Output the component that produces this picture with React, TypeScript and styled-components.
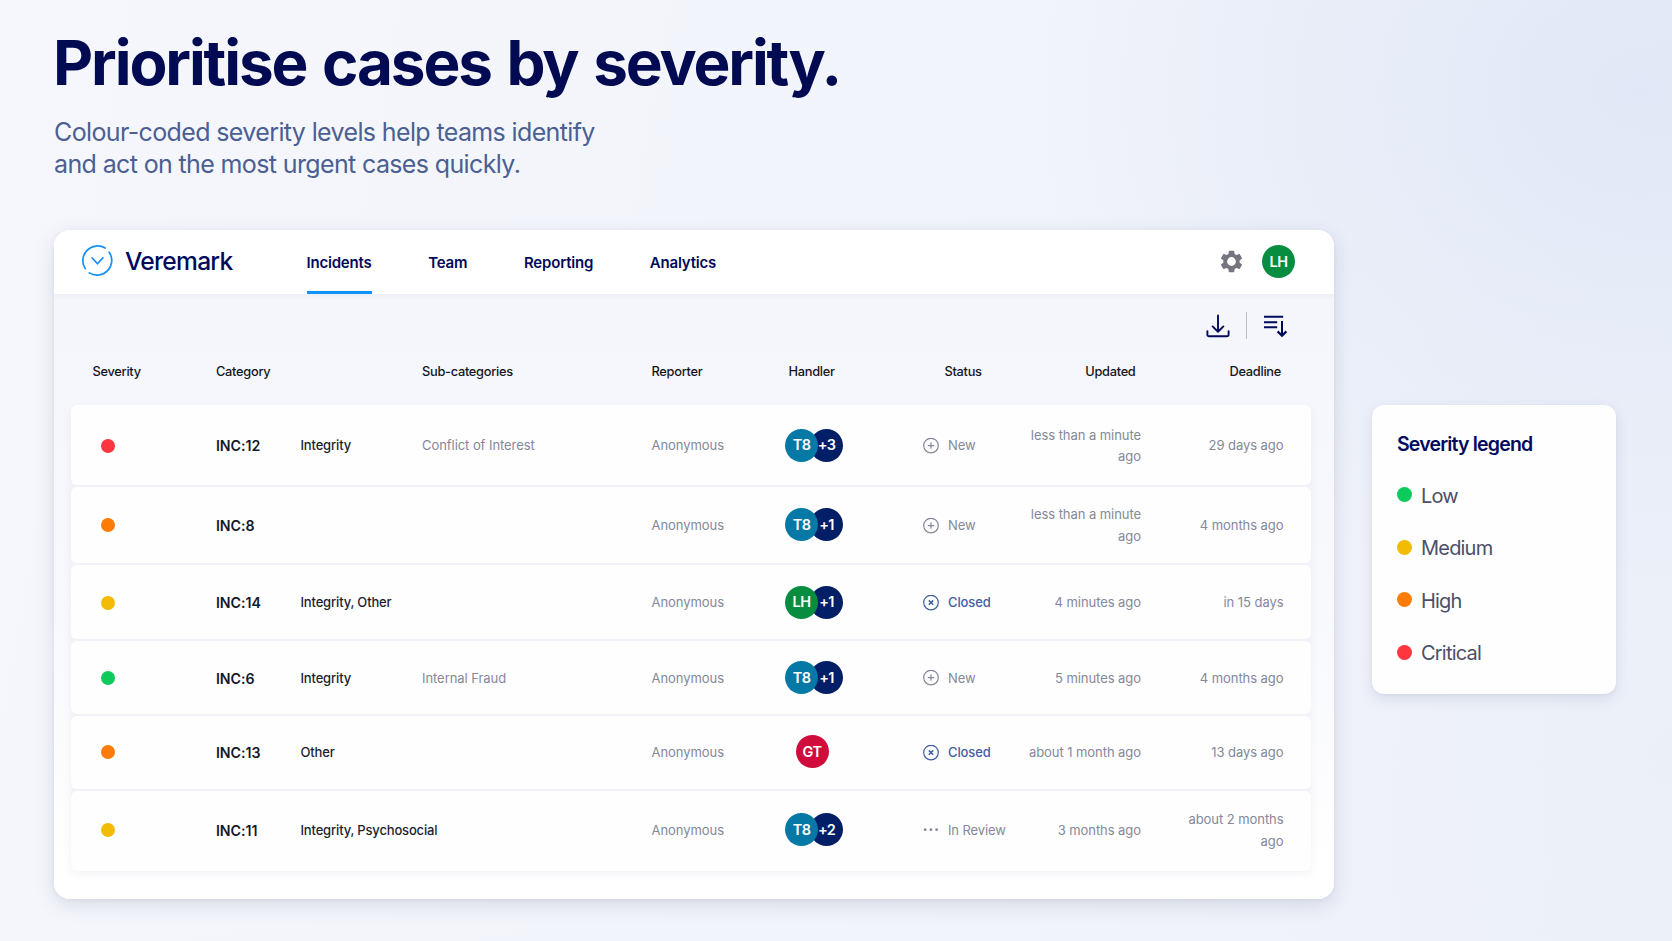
import React from 'react';
import styled, { createGlobalStyle } from 'styled-components';

const GlobalStyle = createGlobalStyle`
  *, *::before, *::after { box-sizing: border-box; }
  body {
    margin: 0;
    font-family: Inter, "Liberation Sans", sans-serif;
    -webkit-font-smoothing: antialiased;
  }
  h1, h2, p, ul { margin: 0; padding: 0; }
`;

const navy = '#020a5c';
const muted = '#84889a';

const Page = styled.main`
  width: 1672px;
  height: 941px;
  padding: 31px 0 0 54px;
  overflow: hidden;
  background:
    radial-gradient(ellipse 620px 520px at 1640px 90px, rgba(222, 230, 246, 0.85), rgba(222, 230, 246, 0) 100%),
    radial-gradient(ellipse 420px 620px at 1672px 760px, rgba(232, 238, 248, 0.5), rgba(232, 238, 248, 0) 100%),
    linear-gradient(100deg, #f5f7fc 0%, #f2f4fb 50%, #eef1f9 100%);
`;

const Title = styled.h1`
  margin-left: -1px;
  font-size: 62px;
  line-height: 64px;
  font-weight: 700;
  letter-spacing: -2.1px;
  word-spacing: 3px;
  color: #020a52;
  white-space: nowrap;
`;

const Subtitle = styled.p`
  margin-top: 21px;
  font-size: 25px;
  line-height: 32px;
  letter-spacing: -0.63px;
  color: #4b5f93;
`;

const Content = styled.div`
  display: flex;
  align-items: flex-start;
  margin-top: 50px;
`;

const Panel = styled.section`
  width: 1280px;
  height: 669px;
  border-radius: 16px;
  overflow: hidden;
  background: #fff;
`;

const PanelShadow = styled.div`
  border-radius: 16px;
  box-shadow: 0 6px 20px rgba(60, 68, 110, 0.15), 0 1px 4px rgba(60, 68, 110, 0.07);
`;

const TopBar = styled.header`
  display: flex;
  height: 64px;
  padding: 0 39px 0 26.5px;
  background: #fff;
`;

const Brand = styled.div`
  display: flex;
  align-items: center;
  width: 226px;
  gap: 11.5px;
  padding-bottom: 4px;
`;

const BrandName = styled.span`
  padding-top: 2px;
  font-size: 24.6px;
  line-height: 30px;
  font-weight: 500;
  letter-spacing: -0.75px;
  color: ${navy};
`;

const Nav = styled.nav`
  display: flex;
  gap: 56.7px;
`;

const NavItem = styled.a<{ $active?: boolean }>`
  height: 64px;
  padding-top: 2px;
  border-bottom: 3px solid ${p => (p.$active ? '#0f93fb' : 'transparent')};
  font-size: 15px;
  line-height: 61px;
  font-weight: 600;
  letter-spacing: -0.2px;
  color: ${navy};
`;

const Account = styled.div`
  display: flex;
  align-items: center;
  gap: 17px;
  margin-left: auto;
  padding-bottom: 1px;
`;

const Body = styled.div`
  height: 605px;
  padding: 0 23px 0 17px;
  background: linear-gradient(180deg, #eff0f6 0, #f5f6fb 6px, #f6f7fc 100px, #f8f9fd 55%, #fff 95%);
`;

const Tools = styled.div`
  display: flex;
  justify-content: flex-end;
  align-items: center;
  height: 63px;
  padding: 0 23px 0 0;
`;

const ToolDivider = styled.span`
  width: 1px;
  height: 27px;
  margin: 0 16px;
  background: #b9bed3;
`;

const columns = '145px 84.5px 121.5px 229.5px 125.5px 70px 76px 98.5px 119.5px 142.5px';

const HeadRow = styled.div`
  display: grid;
  grid-template-columns: ${columns};
  align-items: center;
  height: 48px;
  padding-bottom: 19px;
  font-size: 12.8px;
  line-height: 18px;
  font-weight: 450;
  letter-spacing: -0.28px;
  color: #14151c;
`;

const HeadCell = styled.span<{ $col: number; $indent?: number; $end?: number }>`
  grid-column: ${p => p.$col};
  grid-row: 1;
  padding-left: ${p => p.$indent ?? 0}px;
  padding-right: ${p => p.$end ?? 0}px;
  text-align: ${p => (p.$end ? 'right' : 'left')};
  white-space: nowrap;
`;

const Rows = styled.div`
  display: flex;
  flex-direction: column;
  gap: 2px;
  border-radius: 6px;
  box-shadow: 0 3px 8px rgba(70, 80, 130, 0.07);
  background: #f2f3f9;
`;

const Row = styled.div<{ $height: number; $drop: number }>`
  display: grid;
  grid-template-columns: ${columns};
  align-items: center;
  height: ${p => p.$height}px;
  padding-top: ${p => p.$drop}px;
  border-radius: 6px;
  background: #fefefe;
  font-size: 13px;
  line-height: 21.3px;
  letter-spacing: -0.06px;
  color: ${muted};
`;

const Dot = styled.i<{ $color: string; $size: number }>`
  display: block;
  flex: none;
  width: ${p => p.$size}px;
  height: ${p => p.$size}px;
  border-radius: 50%;
  background: ${p => p.$color};
`;

const SeverityCell = styled.div`
  padding: 0 0 1px 30px;
`;

const Incident = styled.span`
  font-size: 14.2px;
  font-weight: 580;
  color: #15182a;
`;

const Category = styled.span`
  font-weight: 450;
  letter-spacing: -0.17px;
  white-space: nowrap;
  color: #1c1f2e;
`;

const Handlers = styled.div<{ $pair: boolean }>`
  display: flex;
  justify-content: center;
  padding: 0 0 2px ${p => (p.$pair ? 4 : 0)}px;
`;

const Avatar = styled.span<{ $color: string }>`
  display: flex;
  align-items: center;
  justify-content: center;
  width: 33px;
  height: 33px;
  border-radius: 50%;
  background: ${p => p.$color};
  color: #fff;
  font-size: 14.5px;
  line-height: 20px;
  font-weight: 600;
  letter-spacing: -0.6px;
  position: relative;
  z-index: 1;

  & + & {
    margin-left: -8px;
    z-index: 0;
  }
`;

const Status = styled.span<{ $closed?: boolean }>`
  grid-column: 8;
  display: flex;
  align-items: center;
  gap: 9px;
  white-space: nowrap;
  font-weight: ${p => (p.$closed ? 500 : 400)};
  letter-spacing: -0.12px;
  color: ${p => (p.$closed ? '#3f60a2' : muted)};
`;

const Time = styled.span`
  justify-self: end;
  max-width: 119px;
  text-align: right;
`;

const Deadline = styled(Time)`
  max-width: 102px;
`;

const Legend = styled.aside`
  width: 244.5px;
  height: 289px;
  margin: 175px 0 0 37.5px;
  padding: 26px 25.5px 0;
  border-radius: 12px;
  background: #fefefe;
  box-shadow: 0 5px 14px rgba(60, 72, 130, 0.12), 0 1px 3px rgba(60, 72, 130, 0.06);
`;

const LegendTitle = styled.h2`
  font-size: 19.5px;
  line-height: 26px;
  font-weight: 600;
  letter-spacing: -0.82px;
  color: ${navy};
`;

const LegendList = styled.ul`
  margin-top: 20px;
  list-style: none;
`;

const LegendItem = styled.li`
  display: flex;
  align-items: center;
  gap: 9px;
  height: 52.5px;
  padding-bottom: 16.6px;
`;

const LegendLabel = styled.span`
  padding-top: 2px;
  font-size: 20px;
  line-height: 26px;
  letter-spacing: -0.8px;
  color: #4a5068;
`;

const severity = { low: '#0dca5c', medium: '#f2bb05', high: '#fd7c08', critical: '#fd3640' };
const person: Record<string, string> = { T8: '#0479a5', LH: '#078d40', GT: '#d00c3c' };

type Incidents = {
  level: keyof typeof severity;
  id: string;
  category?: string;
  sub?: string;
  handler: string;
  more?: string;
  status: 'New' | 'Closed' | 'In Review';
  updated: string;
  deadline: string;
  height: number;
  drop: number;
};

const incidents: Incidents[] = [
  { level: 'critical', id: 'INC:12', category: 'Integrity', sub: 'Conflict of Interest', handler: 'T8', more: '+3', status: 'New', updated: 'less than a minute ago', deadline: '29 days ago', height: 79.5, drop: 2.5 },
  { level: 'high', id: 'INC:8', handler: 'T8', more: '+1', status: 'New', updated: 'less than a minute ago', deadline: '4 months ago', height: 76.5, drop: 2 },
  { level: 'medium', id: 'INC:14', category: 'Integrity, Other', handler: 'LH', more: '+1', status: 'Closed', updated: '4 minutes ago', deadline: 'in 15 days', height: 74, drop: 2 },
  { level: 'low', id: 'INC:6', category: 'Integrity', sub: 'Internal Fraud', handler: 'T8', more: '+1', status: 'New', updated: '5 minutes ago', deadline: '4 months ago', height: 73, drop: 2 },
  { level: 'high', id: 'INC:13', category: 'Other', handler: 'GT', status: 'Closed', updated: 'about 1 month ago', deadline: '13 days ago', height: 72.5, drop: 1 },
  { level: 'medium', id: 'INC:11', category: 'Integrity, Psychosocial', handler: 'T8', more: '+2', status: 'In Review', updated: '3 months ago', deadline: 'about 2 months ago', height: 80, drop: 0 },
];

const legend: [string, string][] = [
  ['Low', severity.low],
  ['Medium', severity.medium],
  ['High', severity.high],
  ['Critical', severity.critical],
];

const Logo = () => (
  <svg width="33" height="33" viewBox="0 0 33 33" fill="none" stroke="#1590f8" strokeWidth="1.7" strokeLinecap="round" strokeLinejoin="round">
    <path d="M4.2 24.6A14.7 14.7 0 0 1 24.2 4.1" />
    <path d="M28.2 8.2A14.7 14.7 0 0 1 8.2 28.9" />
    <path d="M11 13.8l5.5 6 5.5-6" />
  </svg>
);

const Gear = () => (
  <svg width="27" height="27" viewBox="0 0 24 24" fill="#73757f">
    <path d="M19.14 12.94c.04-.3.06-.61.06-.94 0-.32-.02-.64-.07-.94l2.03-1.58a.49.49 0 0 0 .12-.61l-1.92-3.32a.488.488 0 0 0-.59-.22l-2.39.96c-.5-.38-1.03-.7-1.62-.94l-.36-2.54a.484.484 0 0 0-.48-.41h-3.84c-.24 0-.43.17-.47.41l-.36 2.54c-.59.24-1.13.57-1.62.94l-2.39-.96c-.22-.08-.47 0-.59.22L2.74 8.87c-.12.21-.08.47.12.61l2.03 1.58c-.05.3-.09.63-.09.94s.02.64.07.94l-2.03 1.58a.49.49 0 0 0-.12.61l1.92 3.32c.12.22.37.29.59.22l2.39-.96c.5.38 1.03.7 1.62.94l.36 2.54c.05.24.24.41.48.41h3.84c.24 0 .44-.17.47-.41l.36-2.54c.59-.24 1.13-.56 1.62-.94l2.39.96c.22.08.47 0 .59-.22l1.92-3.32c.12-.22.07-.47-.12-.61l-2.01-1.58zM12 15.9a3.9 3.9 0 1 1 0-7.8 3.9 3.9 0 0 1 0 7.8z" />
  </svg>
);

const DownloadIcon = () => (
  <svg width="24" height="24" viewBox="0 0 24 24" fill="none" stroke={navy} strokeWidth="1.9" strokeLinecap="round" strokeLinejoin="round">
    <path d="M12 1.5v16M6.6 12.4l5.4 5.3 5.4-5.3" />
    <path d="M1.4 17.3v3.4a1.6 1.6 0 0 0 1.6 1.6h18a1.6 1.6 0 0 0 1.6-1.6v-3.4" />
  </svg>
);

const SortIcon = () => (
  <svg width="25" height="24" viewBox="0 0 25 24" fill="none" stroke={navy} strokeWidth="2">
    <path d="M1 2.8h19.2M1 8.2h13.2M1 13.2h13.2" />
    <path d="M19 7v14" />
    <path d="M14.6 17.4l4.4 4.3 4.4-4.3" strokeWidth="2.3" />
  </svg>
);

const StatusIcon = ({ kind }: { kind: Incidents['status'] }) => {
  if (kind === 'In Review') {
    return (
      <svg width="16" height="16" viewBox="0 0 16 16" fill="currentColor">
        <circle cx="2.2" cy="7.7" r="1.4" />
        <circle cx="7.9" cy="7.7" r="1.4" />
        <circle cx="13.6" cy="7.7" r="1.4" />
      </svg>
    );
  }
  return (
    <svg width="16" height="16" viewBox="0 0 16 16" fill="none" stroke="currentColor" strokeWidth="1.2">
      <circle cx="8" cy="7.6" r="7.3" />
      {kind === 'New' ? (
        <path d="M8 4.4v6.4M4.8 7.6h6.4" />
      ) : (
        <path d="M5.8 5.4l4.4 4.4M10.2 5.4l-4.4 4.4" strokeWidth="1.5" />
      )}
    </svg>
  );
};

export default function App() {
  return (
    <>
      <GlobalStyle />
      <Page>
        <Title>Prioritise cases by severity.</Title>
        <Subtitle>
          Colour-coded severity levels help teams identify
          <br />
          and act on the most urgent cases quickly.
        </Subtitle>
        <Content>
          <PanelShadow>
            <Panel>
              <TopBar>
                <Brand>
                  <Logo />
                  <BrandName>Veremark</BrandName>
                </Brand>
                <Nav>
                  <NavItem $active>Incidents</NavItem>
                  <NavItem>Team</NavItem>
                  <NavItem>Reporting</NavItem>
                  <NavItem>Analytics</NavItem>
                </Nav>
                <Account>
                  <Gear />
                  <Avatar $color={person.LH}>LH</Avatar>
                </Account>
              </TopBar>
              <Body>
                <Tools>
                  <DownloadIcon />
                  <ToolDivider />
                  <SortIcon />
                </Tools>
                <HeadRow>
                  <HeadCell $col={1} $indent={21.5}>Severity</HeadCell>
                  <HeadCell $col={2}>Category</HeadCell>
                  <HeadCell $col={4}>Sub-categories</HeadCell>
                  <HeadCell $col={5}>Reporter</HeadCell>
                  <HeadCell $col={6} $indent={11.5}>Handler</HeadCell>
                  <HeadCell $col={8} $indent={21.5}>Status</HeadCell>
                  <HeadCell $col={9} $end={5.5}>Updated</HeadCell>
                  <HeadCell $col={10} $end={2.5}>Deadline</HeadCell>
                </HeadRow>
                <Rows>
                  {incidents.map(r => (
                    <Row key={r.id} $height={r.height} $drop={r.drop}>
                      <SeverityCell>
                        <Dot $color={severity[r.level]} $size={14} />
                      </SeverityCell>
                      <Incident>{r.id}</Incident>
                      <Category>{r.category}</Category>
                      <span>{r.sub}</span>
                      <span>Anonymous</span>
                      <Handlers $pair={!!r.more}>
                        <Avatar $color={person[r.handler]}>{r.handler}</Avatar>
                        {r.more && <Avatar $color="#021e66">{r.more}</Avatar>}
                      </Handlers>
                      <Status $closed={r.status === 'Closed'}>
                        <StatusIcon kind={r.status} />
                        {r.status}
                      </Status>
                      <Time>{r.updated}</Time>
                      <Deadline>{r.deadline}</Deadline>
                    </Row>
                  ))}
                </Rows>
              </Body>
            </Panel>
          </PanelShadow>
          <Legend>
            <LegendTitle>Severity legend</LegendTitle>
            <LegendList>
              {legend.map(([label, color]) => (
                <LegendItem key={label}>
                  <Dot $color={color} $size={15} />
                  <LegendLabel>{label}</LegendLabel>
                </LegendItem>
              ))}
            </LegendList>
          </Legend>
        </Content>
      </Page>
    </>
  );
}
